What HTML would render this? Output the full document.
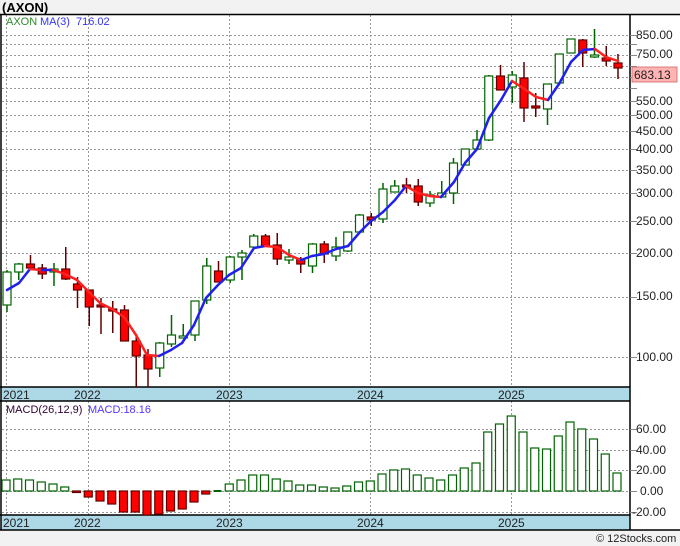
<!DOCTYPE html>
<html><head><meta charset="utf-8"><style>
html,body{margin:0;padding:0;background:#f2f2f2;width:680px;height:546px;overflow:hidden;font-family:"Liberation Sans",sans-serif}
svg{position:absolute;left:0;top:0}
</style></head><body>
<svg id="s" width="680" height="546" xmlns="http://www.w3.org/2000/svg" font-family="Liberation Sans, sans-serif">
<rect x="0" y="14" width="680" height="516" fill="#fff"/>
<text x="2" y="12" font-size="13" font-weight="bold" fill="#000">(AXON)</text>
<g id="grid" stroke="#999" stroke-width="1" stroke-dasharray="2,2"></g>
<rect x="1" y="387" width="629" height="14" fill="#add8e6"/>
<rect x="1" y="515" width="629" height="15" fill="#add8e6"/>
<g stroke="#000" stroke-width="1.5">
<line x1="0" y1="14.5" x2="680" y2="14.5"/>
<line x1="0" y1="387" x2="630" y2="387"/>
<line x1="0" y1="401" x2="630" y2="401"/>
<line x1="0" y1="515" x2="630" y2="515"/>
<line x1="0" y1="530" x2="680" y2="530"/>
<line x1="1" y1="14" x2="1" y2="530"/>
<line x1="630" y1="14" x2="630" y2="530"/>
</g>
<g id="c"></g>
<g font-size="12" fill="#222">
<text x="3" y="399">2021</text><text x="74" y="399">2022</text><text x="216" y="399">2023</text><text x="357" y="399">2024</text><text x="498" y="399">2025</text>
<text x="3" y="527">2021</text><text x="74" y="527">2022</text><text x="216" y="527">2023</text><text x="357" y="527">2024</text><text x="498" y="527">2025</text>
</g>
<g font-size="11">
<text x="6" y="25" fill="#2e8b2e">AXON</text><text x="40" y="25" fill="#3333ff">MA(3)</text><text x="76" y="25" fill="#3333ff">716.02</text>
<text x="6" y="413" fill="#330033">MACD(26,12,9)</text><text x="88" y="413" fill="#5533ff">MACD:18.16</text>
</g>
<g font-size="12" fill="#222">
<text x="636" y="39">850.00</text><text x="636" y="58">750.00</text>
<text x="636" y="105">550.00</text><text x="636" y="119">500.00</text><text x="636" y="135">450.00</text>
<text x="636" y="153">400.00</text><text x="636" y="174">350.00</text><text x="636" y="197">300.00</text>
<text x="636" y="225">250.00</text><text x="636" y="257">200.00</text><text x="636" y="300">150.00</text>
<text x="636" y="361">100.00</text>
<text x="636" y="433">60.00</text><text x="636" y="454">40.00</text><text x="636" y="474">20.00</text>
<text x="640" y="495">0.00</text><text x="632" y="516">-20.00</text>
</g>
<rect x="632" y="67" width="45" height="15" fill="#ffb3b3" stroke="#c66" stroke-width="0.8"/>
<text x="634" y="79" font-size="12" fill="#222">683.13</text>
<text x="596" y="542" font-size="11" fill="#222">© 12Stocks.com</text>
</svg>
<script>
var NS="http://www.w3.org/2000/svg",g=document.getElementById('grid'),c=document.getElementById('c');
function el(p,t,a){var e=document.createElementNS(NS,t);for(var k in a)e.setAttribute(k,a[k]);p.appendChild(e);return e;}
[35,44,55,66,77,88,101,115,131,149,170,193,221,253,297,357].forEach(function(y){el(g,'line',{x1:2,y1:y+.5,x2:630,y2:y+.5});el(c,'line',{x1:630,y1:y+.5,x2:637,y2:y+.5,stroke:'#888'});});
[429,450,470,491,512].forEach(function(y){el(g,'line',{x1:2,y1:y+.5,x2:630,y2:y+.5});el(c,'line',{x1:630,y1:y+.5,x2:637,y2:y+.5,stroke:'#888'});});
[6,88,229,370,511].forEach(function(x){el(g,'line',{x1:x+.5,y1:15,x2:x+.5,y2:387});el(g,'line',{x1:x+.5,y1:401,x2:x+.5,y2:515});});
var C=[['g',272,305,270,312],['g',264,272,263,280],['r',264,268,255,269],['r',268,274,264,279],['g',269,272,263,286],['r',269,279,247,280],['r',284,290,277,308],['r',290,307,290,326],['r',305,307,298,334],['r',309,310,301,333],['r',310,341,305,341],['r',341,356,335,387],['r',355,369,349,387],['g',343,368,342,377],['g',335,344,315,347],['g',336,337,324,338],['g',301,335,301,341],['g',266,300,258,304],['r',271,282,261,282],['g',257,280,256,283],
['g',253,257,250,280],['g',236,247,234,247],['r',236,246,234,246],['r',245,259,233,265],['g',257,260,249,264],['r',259,264,257,273],['g',244,266,243,273],['r',244,254,241,263],['g',247,256,237,261],['g',232,251,232,252],['g',215,232,214,233],['r',217,220,213,226],['g',189,219,183,223],['g',186,192,180,192],['r',185,187,178,193],['r',186,202,179,206],['g',195,203,191,207],['g',193,197,181,197],['g',163,193,158,204],['g',149,165,149,165],['g',140,149,130,149],['g',76,140,75,141],['r',76,90,65,90],['g',75,87,71,103],['r',78,108,62,122],['r',106,108,93,117],['g',84,109,84,125],['g',54,83,54,83],['g',39,53,39,53],['r',40,53,39,67],['g',55,57,29,58],['r',58,61,46,66],['r',63,68,54,79]];
C.forEach(function(d,i){var x=7+11.75*i,gr=d[0]=='g';var sc=gr?'#006400':'#600000';
el(c,'line',{x1:x,y1:d[3],x2:x,y2:d[4],stroke:sc,'stroke-width':1.5});
var h=Math.max(d[2]-d[1],2);el(c,'rect',{x:x-4,y:d[1],width:8,height:h,fill:gr?'#fff':'#ff0000',stroke:sc,'stroke-width':1.2});});
var M=[[7,290],[19,283],[30,269],[42,270],[53,270],[65,274],[77,280],[89,292],[100,303],[112,309],[124,317],[136,335],[147,355],[159,356],[171,350],[182,343],[194,325],[206,298],[218,285],[229,275],[241,268],[254,248],[265,246],[277,247],[289,255],[301,260],[312,256],[324,254],[336,249],[348,246],[360,232],[370,222],[383,212],[395,200],[406,186],[418,193],[430,196],[441,197],[454,182],[465,163],[477,149],[489,118],[501,100],[512,81],[523,88],[536,97],[548,100],[559,84],[571,62],[583,50],[595,49],[606,57],[618,61]];
for(var i=1;i<M.length;i++){el(c,'line',{x1:M[i-1][0],y1:M[i-1][1],x2:M[i][0],y2:M[i][1],stroke:M[i][1]>M[i-1][1]?'#ff2020':'#2020ee','stroke-width':2.5,'stroke-linecap':'round'});}
var T=[480,479,480,482,484,487,492.5,497,501,504,512,512,515,514,511,509,502,494,491,484,480,475,475,479,481,485,485,487,488,486,482,481,474,470,469,475,478,480,475,468,463,432,424,416,432,448,449,436,422,429,439,454,473];
T.forEach(function(t,i){var x=6+11.75*i,z=491;if(i==18){el(c,'rect',{x:x-4,y:490,width:8,height:2,fill:'#006400'});return;}
if(t<z)el(c,'rect',{x:x-4,y:t,width:8,height:z-t,fill:'#fff',stroke:'#006400','stroke-width':1.2});
else el(c,'rect',{x:x-4,y:z,width:8,height:Math.max(t-z,1.5),fill:'#ff0000',stroke:'#600000','stroke-width':1.2});});
</script>
</body></html>
